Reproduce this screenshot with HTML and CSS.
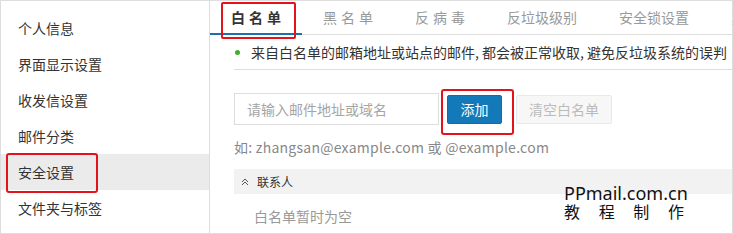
FILE: index.html
```html
<!DOCTYPE html>
<html lang="zh-CN">
<head>
<meta charset="utf-8">
<title>安全设置 - 白名单</title>
<link rel="stylesheet" href="styles.css">
</head>
<body>
<div class="frame">
  <nav class="sidebar">
    <div class="nav-item">个人信息</div>
    <div class="nav-item">界面显示设置</div>
    <div class="nav-item">收发信设置</div>
    <div class="nav-item">邮件分类</div>
    <div class="nav-item active marked">安全设置</div>
    <div class="nav-item">文件夹与标签</div>
  </nav>
  <main class="main">
    <div class="tabs">
      <div class="tab active marked"><span class="spaced">白名单</span></div>
      <div class="tab"><span class="spaced">黑名单</span></div>
      <div class="tab"><span class="spaced">反病毒</span></div>
      <div class="tab">反垃圾级别</div>
      <div class="tab">安全锁设置</div>
      <div class="tab">其他设置</div>
    </div>
    <div class="content">
      <div class="notice"><span class="dot"></span>来自白名单的邮箱地址或站点的邮件, 都会被正常收取, 避免反垃圾系统的误判</div>
      <div class="form-row">
        <input class="field" type="text" placeholder="请输入邮件地址或域名">
        <button class="btn btn-primary marked" type="button">添加</button>
        <button class="btn btn-disabled" type="button">清空白名单</button>
      </div>
      <div class="hint">如: zhangsan@example.com 或 @example.com</div>
      <div class="group">
        <div class="group-head">
          <svg class="chev" width="8" height="8" viewBox="0 0 8 8"><path d="M1 4 L4 1 L7 4 M1 7 L4 4 L7 7" fill="none" stroke="#555" stroke-width="1"/></svg>
          <span>联系人</span>
        </div>
        <div class="group-empty">白名单暂时为空</div>
      </div>
    </div>
    <div class="watermark">
      <div class="wm-top">PPmail.com.cn</div>
      <div class="wm-bottom"><span>教</span><span>程</span><span>制</span><span>作</span></div>
    </div>
  </main>
</div>
</body>
</html>
```
FILE: styles.css
```css
* { box-sizing: border-box; }
html, body { margin: 0; padding: 0; background: #fff; }
body {
  font-family: "Noto Sans CJK SC", "Noto Sans", sans-serif;
  font-size: 14px;
  color: #333;
}
.frame {
  width: 733px;
  height: 234px;
  border: 1px solid #ddd;
  display: flex;
  overflow: hidden;
}
.sidebar {
  width: 209px;
  flex: none;
  border-right: 1px solid #ddd;
  padding-top: 9px;
}
.nav-item {
  position: relative;
  height: 36px;
  line-height: 36px;
  padding-left: 17px;
  color: #333;
}
.nav-item.active { background: #ebebeb; }
.marked { position: relative; }
.nav-item.marked::after {
  content: "";
  position: absolute;
  left: 5px;
  top: -1px;
  width: 88px;
  height: 36px;
  border: 2px solid #e3131b;
  border-radius: 3px;
}
.main {
  flex: 1;
  min-width: 0;
  position: relative;
  overflow: hidden;
}
.tabs {
  display: flex;
  height: 34px;
  border-bottom: 1px solid #ddd;
  white-space: nowrap;
}
.tab {
  flex: none;
  padding: 0 21px;
  line-height: 32px;
  color: #999;
  font-size: 14px;
}
.tab.active {
  color: #333;
  font-weight: bold;
  border-bottom: 2px solid #1f6fae;
  margin-bottom: -1px;
}
.spaced { letter-spacing: 4px; margin-right: -4px; }
.tab.marked::after {
  content: "";
  position: absolute;
  left: 11px;
  top: 1px;
  width: 71px;
  height: 33px;
  border: 2px solid #e3131b;
  border-radius: 2px;
}
.content { padding-left: 24px; }
.notice {
  display: flex;
  align-items: center;
  height: 35px;
  border-bottom: 1px solid #ddd;
  white-space: nowrap;
  color: #333;
}
.dot {
  width: 5px;
  height: 5px;
  border-radius: 50%;
  background: #3fae2a;
  margin: 0 11px 0 1px;
  flex: none;
}
.form-row {
  display: flex;
  align-items: center;
  margin-top: 23px;
}
.field {
  width: 205px;
  height: 32px;
  border: 1px solid #ddd;
  padding: 0 12px;
  font: inherit;
  font-size: 14px;
  color: #333;
  outline: none;
}
.field::placeholder { color: #a5a5a5; }
.btn {
  height: 29px;
  font: inherit;
  font-size: 14px;
  border-radius: 2px;
  padding: 0;
}
.btn-primary {
  width: 55px;
  margin-left: 8px;
  background: #1479b8;
  border: 1px solid #0f6ea8;
  color: #fff;
}
.btn-primary.marked::after {
  content: "";
  position: absolute;
  left: -7px;
  top: -7px;
  width: 69px;
  height: 42px;
  border: 2px solid #e3131b;
  border-radius: 3px;
}
.btn-disabled {
  width: 96px;
  margin-left: 14px;
  background: #f7f7f7;
  border: 1px solid #e8e8e8;
  color: #bbb;
}
.hint {
  margin-top: 12px;
  line-height: 20px;
  color: #888;
  white-space: nowrap;
  letter-spacing: 0.25px;
}
.group { margin-top: 12px; }
.group-head {
  display: flex;
  align-items: center;
  height: 25px;
  background: #f2f2f2;
  padding-left: 7px;
  font-size: 12px;
  color: #333;
}
.chev { margin-right: 8px; }
.group-empty {
  padding: 12px 0 0 20px;
  line-height: 20px;
  color: #999;
}
.watermark {
  position: absolute;
  left: 354px;
  top: 183px;
  width: 122px;
  color: #111;
  font-family: "Noto Sans", "Noto Sans CJK SC", sans-serif;
}
.wm-top {
  font-size: 18px;
  line-height: 19px;
}
.wm-bottom {
  display: flex;
  justify-content: space-between;
  font-family: "Noto Sans CJK SC", sans-serif;
  font-size: 16px;
  line-height: 16px;
  padding-right: 2px;
}
```
